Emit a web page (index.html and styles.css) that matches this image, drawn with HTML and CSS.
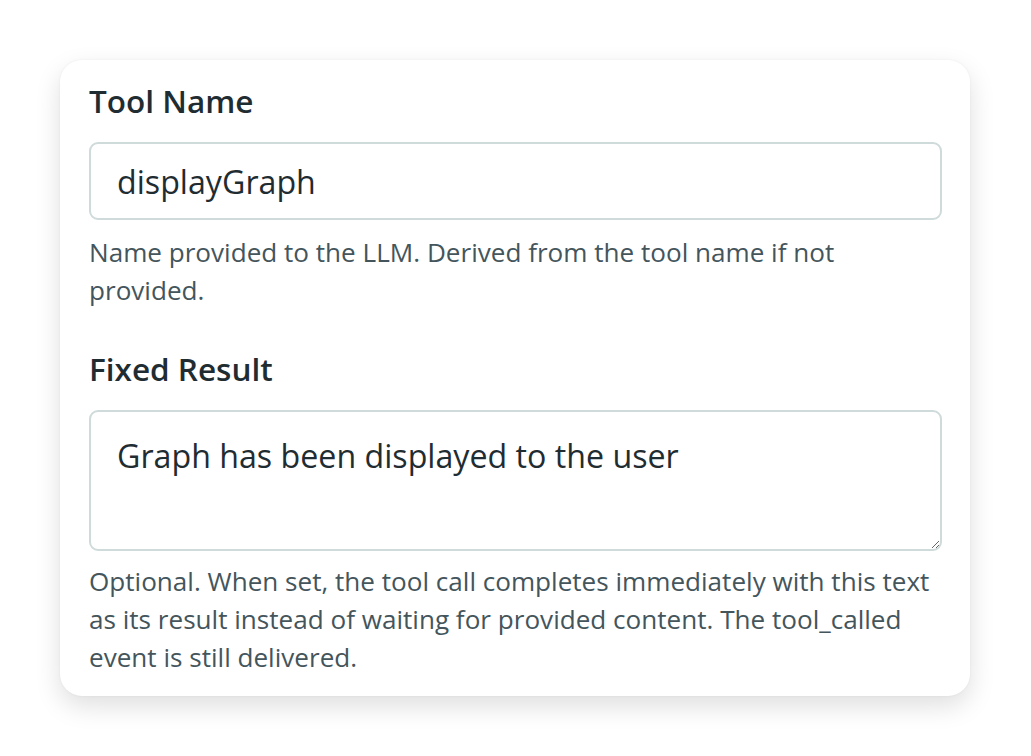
FILE: index.html
```html
<!DOCTYPE html>
<html lang="en">
<head>
<meta charset="utf-8">
<title>Tool settings</title>
<link rel="stylesheet" href="styles.css">
</head>
<body>
<main class="page">
  <section class="card">
    <div class="field">
      <label class="label" for="toolName">Tool Name</label>
      <input class="input" id="toolName" type="text" value="displayGraph">
      <p class="help">Name provided to the LLM. Derived from the tool name if not provided.</p>
    </div>
    <div class="field">
      <label class="label" for="fixedResult">Fixed Result</label>
      <textarea class="textarea" id="fixedResult">Graph has been displayed to the user</textarea>
      <p class="help">Optional. When set, the tool call completes immediately with this text as its result instead of waiting for provided content. The tool_called event is still delivered.</p>
    </div>
  </section>
</main>
</body>
</html>
```
FILE: styles.css
```css
* { box-sizing: border-box; }
html, body { margin: 0; padding: 0; background: #ffffff; }
body { font-family: "Open Sans", Lato, sans-serif; color: #1f2d33; }
.page { padding: 60px 61px 60px 60px; }
.card {
  width: 910px;
  background: #ffffff;
  border-radius: 22px;
  padding: 20px 28px 20px 29px;
  box-shadow: 0 10px 26px rgba(0, 0, 0, 0.13), 0 0 3px rgba(0, 0, 0, 0.05);
  display: flex;
  flex-direction: column;
  gap: 39px;
}
.field { display: flex; flex-direction: column; }
.label {
  font-size: 31.5px;
  font-weight: 600;
  line-height: 42px;
  color: #1f2d33;
  margin-bottom: 20px;
}
.input, .textarea {
  width: 100%;
  font-family: inherit;
  font-size: 32.2px;
  color: #1f2d33;
  background: #ffffff;
  border: 2px solid #cfdadb;
  border-radius: 9px;
  padding: 0 26px;
  outline: none;
}
.input { height: 78px; }
.textarea {
  height: 141px;
  padding-top: 23px;
  line-height: 42px;
  resize: vertical;
  display: block;
}
.help {
  margin: 13px 0 0;
  font-size: 26.1px;
  line-height: 38px;
  color: #44555c;
}
.textarea + .help { margin-top: 11px; }
```
